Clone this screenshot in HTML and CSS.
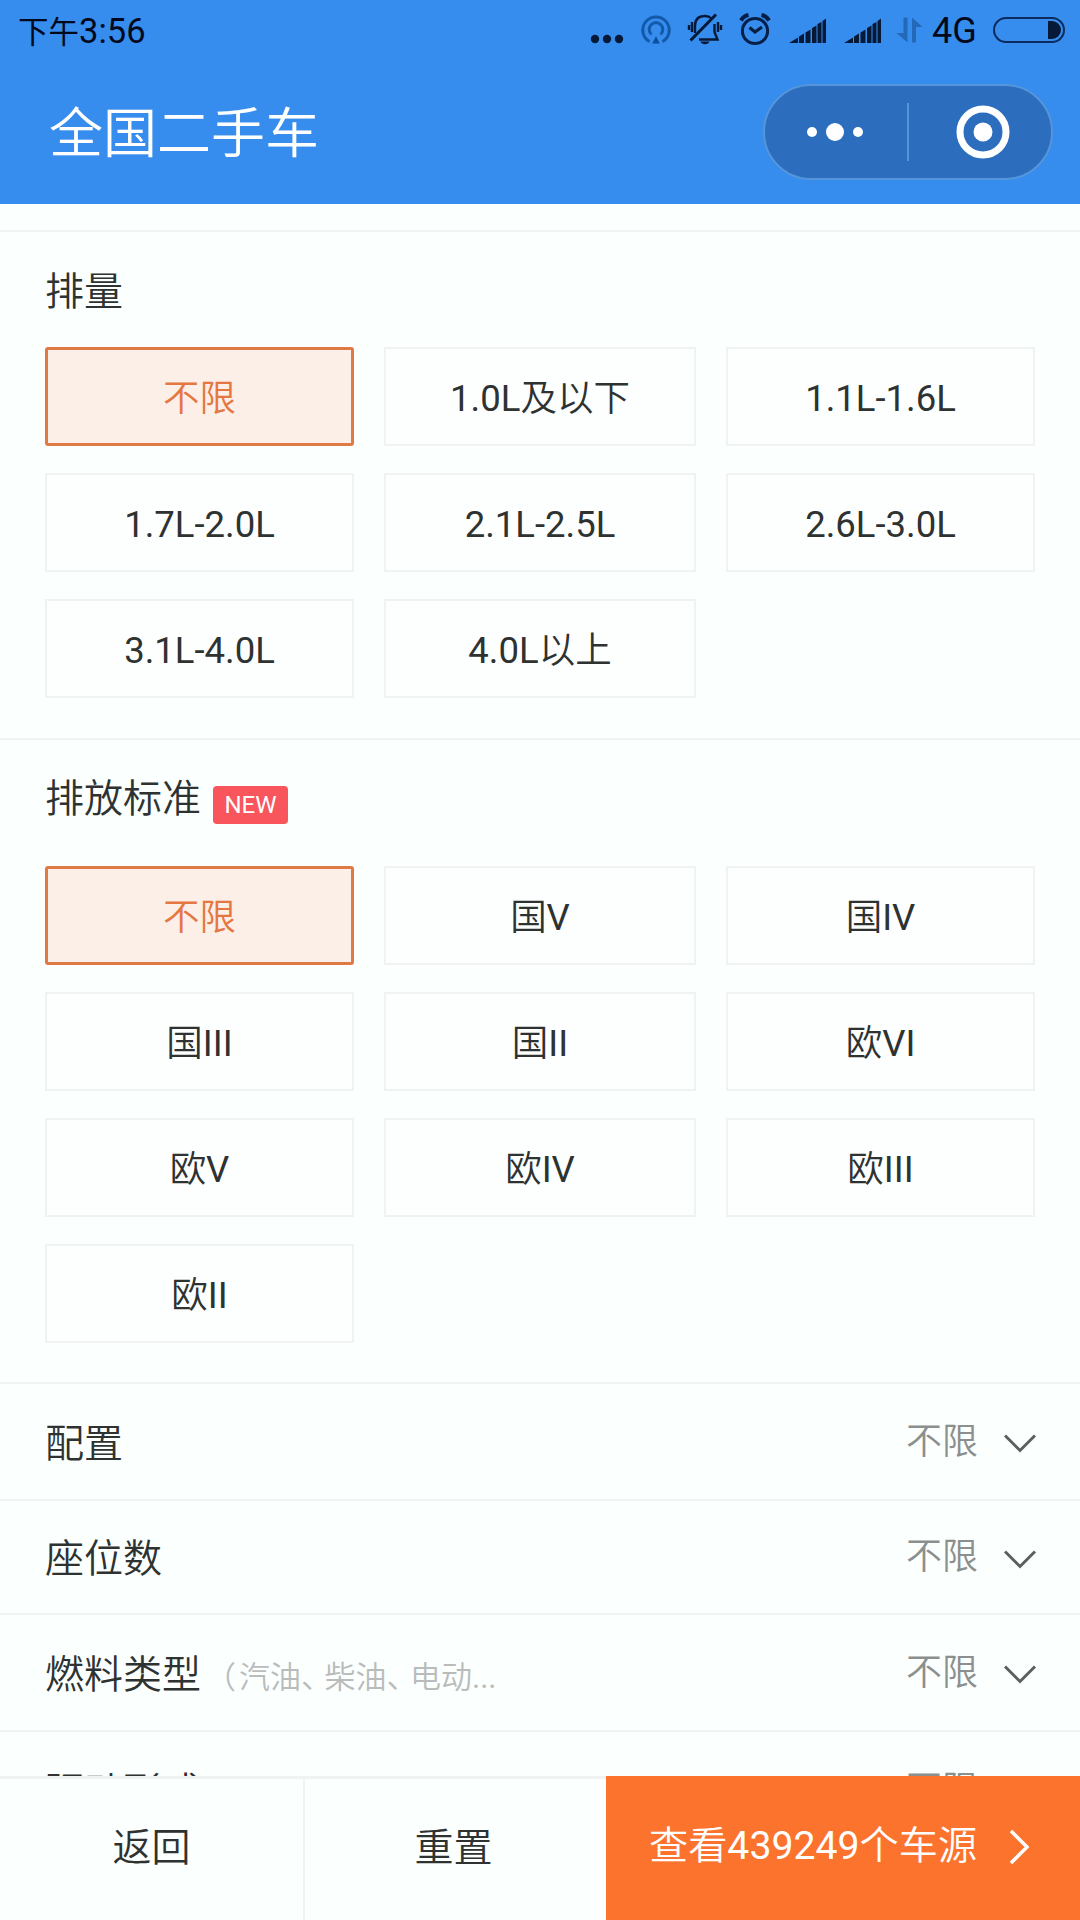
FILE: index.html
```html
<!DOCTYPE html>
<html lang="zh-CN">
<head>
<meta charset="utf-8">
<title>全国二手车</title>
<link rel="stylesheet" href="styles.css">
</head>
<body>
<header class="top">
  <div class="status">
    <div class="clock"><span class="clock-period">下午</span>3:56</div>
    <div class="status-icons">
      <svg class="ico-more" viewBox="590 0 34 60" width="34" height="60" fill="#061a38"><circle cx="595" cy="39" r="4.2"/><circle cx="607" cy="39" r="4.2"/><circle cx="619" cy="39" r="4.2"/></svg>
      <svg class="ico-hotspot" viewBox="640 0 32 60" width="32" height="60" fill="none" stroke="#1259a9" stroke-width="3"><path d="M649.5 41.6A13.2 13.2 0 1 1 662.5 41.6"/><path d="M651.5 34.5A6.8 6.8 0 1 1 660.5 34.5"/><path d="M656 36l3.8 7.5h-7.600z" fill="#0c4f9e" stroke="none"/></svg>
      <svg class="ico-bell" viewBox="687 0 36 60" width="36" height="60" fill="none" stroke="#061a38" stroke-width="2.400"><path d="M695 33V26C695 19 699 16 705 16c3 0 5 1 6.500 2.500M714.500 24v8l3 7.500H699"/><path d="M716 14.500L690.500 40.500" stroke-width="3"/><path d="M692 22v10M689 25v5M718 22v10M721 25v5"/><path d="M700.500 41.500h9c-1 3.500-8 3.500-9 0z" fill="#061a38" stroke="none"/></svg>
      <svg class="ico-alarm" viewBox="739 0 32 60" width="32" height="60" fill="none" stroke="#061f46" stroke-width="3"><circle cx="755" cy="31" r="12.600"/><path d="M749.500 27.500l5.500 4.500 7-5" stroke-width="3.200"/><path d="M741 20.500q2.500-4.500 7.500-5.500M769 20.500q-2.500-4.500-7.500-5.500" stroke-width="4"/></svg>
      <svg class="ico-signal" viewBox="789 0 37 60" width="37" height="60" fill="#061a38"><path d="M789 43l9-5.500v5.500zM799 36.500l5-3V43H799zM805.500 32.500l5-3V43h-5zM812 28l4.500-2.500V43h-4.500zM817.500 24l4-2V43h-4zM822.500 21l4-3V43h-4z"/></svg>
      <svg class="ico-signal-second" viewBox="789 0 37 60" width="37" height="60" fill="#061a38"><path d="M789 43l9-5.500v5.500zM799 36.500l5-3V43H799zM805.500 32.500l5-3V43h-5zM812 28l4.500-2.500V43h-4.500zM817.500 24l4-2V43h-4zM822.500 21l4-3V43h-4z"/></svg>
      <svg class="ico-data" viewBox="896 0 28 60" width="28" height="60" fill="#2468b8"><path d="M903.500 17.500h4V42.500L896.500 33h7z"/><path d="M912 17.500L922.500 27h-6.500V42.500h-4z"/></svg>
      <span class="network">4G</span>
      <svg class="ico-battery" viewBox="993 0 72 60" width="72" height="60"><rect x="994" y="18" width="70" height="24" rx="12" fill="none" stroke="#0b2b5c" stroke-width="2"/><path d="M1048 21h4a9 9 0 0 1 0 18h-4z" fill="#061a38"/></svg>
    </div>
  </div>
  <div class="nav">
    <h1 class="nav-title">全国二手车</h1>
    <div class="capsule">
      <svg class="capsule-menu" width="56" height="20" viewBox="0 0 56 20" fill="#fff"><circle cx="5" cy="10" r="5"/><circle cx="28" cy="10" r="9"/><circle cx="51" cy="10" r="5"/></svg>
      <span class="capsule-divider"></span>
      <svg class="capsule-close" width="54" height="54" viewBox="0 0 54 54"><circle cx="27" cy="27" r="23" fill="none" stroke="#fff" stroke-width="7"/><circle cx="27" cy="27" r="9.500" fill="#fff"/></svg>
    </div>
  </div>
</header>

<main class="filters">
  <section class="group group-displacement">
    <h2 class="group-title">排量</h2>
    <div class="options">
      <div class="option selected">不限</div>
      <div class="option">1.0L及以下</div>
      <div class="option">1.1L-1.6L</div>
      <div class="option">1.7L-2.0L</div>
      <div class="option">2.1L-2.5L</div>
      <div class="option">2.6L-3.0L</div>
      <div class="option">3.1L-4.0L</div>
      <div class="option">4.0L以上</div>
    </div>
  </section>
  <section class="group group-emission">
    <h2 class="group-title">排放标准<span class="badge">NEW</span></h2>
    <div class="options">
      <div class="option selected">不限</div>
      <div class="option">国V</div>
      <div class="option">国IV</div>
      <div class="option">国III</div>
      <div class="option">国II</div>
      <div class="option">欧VI</div>
      <div class="option">欧V</div>
      <div class="option">欧IV</div>
      <div class="option">欧III</div>
      <div class="option">欧II</div>
    </div>
  </section>
  <div class="row">
    <span class="row-label">配置</span>
    <span class="row-value">不限</span>
    <svg class="chevron" width="32" height="20" viewBox="0 0 32 20"><path d="M1 1.500l15 15 15-15"/></svg>
  </div>
  <div class="row row-seats">
    <span class="row-label">座位数</span>
    <span class="row-value">不限</span>
    <svg class="chevron" width="32" height="20" viewBox="0 0 32 20"><path d="M1 1.500l15 15 15-15"/></svg>
  </div>
  <div class="row">
    <span class="row-label">燃料类型</span>
    <span class="row-hint"><span class="paren">（</span>汽油<span class="comma">、</span>柴油<span class="comma">、</span>电动...</span>
    <span class="row-value">不限</span>
    <svg class="chevron" width="32" height="20" viewBox="0 0 32 20"><path d="M1 1.500l15 15 15-15"/></svg>
  </div>
  <div class="row row-drive">
    <span class="row-label">驱动形式</span>
    <span class="row-value">不限</span>
    <svg class="chevron" width="32" height="20" viewBox="0 0 32 20"><path d="M1 1.500l15 15 15-15"/></svg>
  </div>
</main>

<footer class="actions">
  <div class="action action-back">返回</div>
  <div class="action action-reset">重置</div>
  <div class="action-submit">查看439249个车源<svg class="arrow" width="21" height="36" viewBox="0 0 21 36"><path d="M2 2l16 16L2 34"/></svg></div>
</footer>
</body>
</html>
```
FILE: styles.css
```css
* {
  box-sizing: border-box;
}

body {
  margin: 0;
  width: 1080px;
  height: 1920px;
  overflow: hidden;
  display: flex;
  flex-direction: column;
  background: #fbfffe;
  color: #2e3231;
  font-family: Roboto, "Noto Sans CJK SC DemiLight", "Noto Sans CJK SC", sans-serif;
  font-weight: 400;
  line-height: 1.2;
}

svg {
  display: block;
  flex: none;
}

.top {
  flex: none;
  height: 204px;
  background: #368dee;
}

.status {
  display: flex;
  justify-content: space-between;
  height: 60px;
  padding: 0 15px 0 18px;
  color: #03091c;
}

.clock {
  font-size: 34.5px;
  line-height: 63px;
}

.clock-period {
  font-family: "Noto Sans CJK SC", sans-serif;
  font-size: 30.5px;
  line-height: 1;
}

.status-icons {
  display: flex;
}

.ico-hotspot {
  margin-left: 16px;
}

.ico-bell {
  margin-left: 15px;
}

.ico-alarm {
  margin-left: 16px;
}

.ico-signal,
.ico-signal-second {
  margin-left: 18px;
}

.ico-data {
  margin-left: 15px;
}

.network {
  width: 45px;
  margin: 0 16px 0 8px;
  font-size: 36px;
  line-height: 62px;
}

.nav {
  display: flex;
  align-items: center;
  justify-content: space-between;
  height: 144px;
  padding: 0 27px 0 49px;
}

.nav-title {
  margin: 0;
  padding-top: 7px;
  color: #fff;
  font-size: 54px;
  font-weight: 400;
}

.capsule {
  display: flex;
  align-items: center;
  width: 290px;
  height: 96px;
  border: 2px solid #5595dc;
  border-radius: 48px;
  background: #2c6ebd;
}

.capsule-menu {
  margin-left: 42px;
}

.capsule-divider {
  width: 2px;
  height: 58px;
  margin: 0 47px 0 44px;
  background: #5595dc;
}

.filters {
  flex: 1;
  min-height: 0;
  overflow: hidden;
  padding-top: 26px;
}

.group {
  border-top: 2px solid #f0f3f3;
  padding: 0 45px;
}

.group-displacement {
  height: 508px;
}

.group-emission {
  height: 644px;
}

.group-title {
  display: flex;
  align-items: center;
  height: 115px;
  margin: 0;
  padding-top: 6px;
  font-size: 39px;
  font-weight: 400;
}

.group-emission .group-title {
  margin-bottom: 11px;
  padding-top: 4px;
}

.badge {
  width: 75px;
  height: 38px;
  margin: 10px 0 0 12px;
  border-radius: 4px;
  background: #f9555d;
  color: #fff;
  font-size: 24px;
  line-height: 38px;
  text-align: center;
}

.options {
  display: grid;
  grid-template-columns: 309px 312px 309px;
  grid-auto-rows: 99px;
  gap: 27px 30px;
}

.option {
  display: flex;
  align-items: center;
  justify-content: center;
  padding-top: 4px;
  border: 2px solid #f1f3f3;
  background: #fdffff;
  font-size: 36.5px;
}

.option.selected {
  border: 3px solid #e07a45;
  border-radius: 3px;
  background: #fcefe8;
  color: #e57740;
}

.row {
  display: flex;
  align-items: center;
  height: 117px;
  padding: 0 44px 0 45px;
  border-top: 2px solid #f0f3f3;
}

.row-seats {
  height: 114px;
}

.row-label {
  padding-top: 5px;
  font-size: 39px;
}

.row-seats .row-label {
  padding-top: 4px;
}

.row-hint {
  margin: 11px 0 0 4px;
  color: #b9bcbb;
  font-size: 31px;
}

.paren {
  letter-spacing: 3px;
}

.comma {
  letter-spacing: -7.5px;
}

.row-value {
  margin-left: auto;
  padding-top: 3px;
  color: #8b8f8e;
  font-size: 36px;
}

.row-seats .row-value {
  padding-top: 1px;
}

.chevron {
  margin: 5px 0 0 26px;
}

.chevron path {
  fill: none;
  stroke: #5b5f5e;
  stroke-width: 3;
}

.actions {
  flex: none;
  display: flex;
  height: 144px;
  font-size: 39px;
}

.action {
  display: flex;
  align-items: center;
  justify-content: center;
  padding-bottom: 3px;
  border-top: 3px solid #f0f3f3;
}

.action-back {
  width: 305px;
  border-right: 2px solid #f0f3f3;
}

.action-reset {
  width: 301px;
  padding-right: 4px;
}

.action-submit {
  flex: 1;
  display: flex;
  align-items: center;
  padding: 0 0 3px 43px;
  background: #fc732d;
  color: #fff;
  font-size: 39.2px;
}

.arrow {
  margin-left: 32px;
}

.arrow path {
  fill: none;
  stroke: #fff;
  stroke-width: 3.5;
}
```
